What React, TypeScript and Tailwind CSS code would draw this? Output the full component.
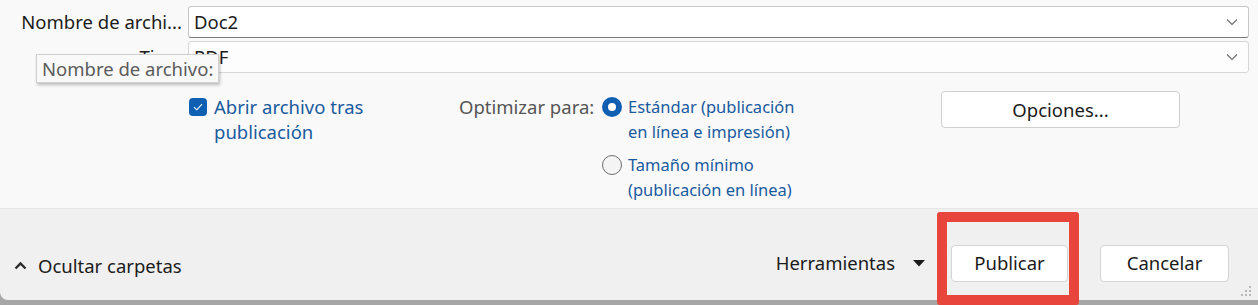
import React from "react";

const Chevron = () => (
  <svg width="12" height="8" viewBox="0 0 12 8" className="text-[#6b6b6b]">
    <path d="M1 1.5 L6 6.5 L11 1.5" fill="none" stroke="currentColor" strokeWidth="1.1" />
  </svg>
);

export default function App() {
  return (
    <div
      className="w-[1258px] h-[305px] bg-[#a6a6a6] relative overflow-hidden text-[18.5px] text-[#1b1b1b]"
      style={{ fontFamily: '"Noto Sans", "Open Sans", sans-serif' }}
    >
      <div className="h-[300px] flex flex-col rounded-bl-[8px] overflow-hidden">
        {/* top */}
        <div className="h-[209px] bg-[#f9f9f9] border-b border-[#e6e6e6] pt-[6px] relative">
          <div className="flex items-center h-[32px]">
            <div className="w-[188px] pr-[6px] text-right leading-none whitespace-nowrap">Nombre de archi...</div>
            <div className="flex-1 mr-[9px] h-[32px] bg-white border border-[#c8c8c8] border-b-[#7a7a7a] rounded-[3px] flex items-center pl-[5px] pr-[10px]">
              <span className="flex-1 leading-none">Doc2</span>
              <Chevron />
            </div>
          </div>
          <div className="flex items-center h-[32px] mt-[3px]">
            <div className="w-[188px] pr-[6px] text-right leading-none text-[#1b1b1b]">Tipo:</div>
            <div className="flex-1 mr-[9px] h-[32px] bg-[#fdfdfd] border border-[#d6d6d6] rounded-[3px] flex items-center pl-[5px] pr-[10px]">
              <span className="flex-1 leading-none">PDF</span>
              <Chevron />
            </div>
          </div>
          {/* tooltip */}
          <div className="absolute left-[36px] top-[54px] h-[29px] px-[5px] flex items-center bg-[#f9f9f9] border border-[#d0d0d0] shadow-[1px_2px_3px_rgba(0,0,0,0.25)] text-[18.5px] text-[#5b5b5b] whitespace-nowrap">
            Nombre de archivo:
          </div>
          {/* options */}
          <div className="flex mt-[21px] pl-[189px]">
            <div className="flex w-[270px] shrink-0">
              <div className="w-[18px] h-[18px] mt-[4px] rounded-[4px] bg-[#0f5fb3] flex items-center justify-center shrink-0">
                <svg width="10" height="8" viewBox="0 0 10 8">
                  <path d="M1 4.2 L3.8 6.8 L9 1.2" fill="none" stroke="white" strokeWidth="1.1" />
                </svg>
              </div>
              <div className="ml-[7px] text-[#1a5a9e] leading-[25px]">
                Abrir archivo tras
                <br />
                publicación
              </div>
            </div>
            <div className="w-[143px] shrink-0 text-[#555] leading-[25px] whitespace-nowrap">Optimizar para:</div>
            <div className="flex flex-col w-[339px] shrink-0 text-[16.5px]">
              <div className="flex">
                <div className="w-[20px] h-[20px] mt-[3px] rounded-full bg-[#0f5fb3] flex items-center justify-center shrink-0">
                  <div className="w-[8px] h-[8px] rounded-full bg-white" />
                </div>
                <div className="ml-[6px] text-[#1a5a9e] leading-[25px] whitespace-nowrap">
                  Estándar (publicación
                  <br />
                  en línea e impresión)
                </div>
              </div>
              <div className="flex mt-[8px]">
                <div className="w-[20px] h-[20px] mt-[3px] rounded-full bg-[#f4f4f4] border border-[#6e6e6e] shrink-0" />
                <div className="ml-[6px] text-[#1a5a9e] leading-[25px] whitespace-nowrap">
                  Tamaño mínimo
                  <br />
                  (publicación en línea)
                </div>
              </div>
            </div>
            <div className="w-[239px] h-[37px] -mt-[3px] shrink-0 bg-white border border-[#d0d0d0] rounded-[4px] flex items-center justify-center">
              Opciones...
            </div>
          </div>
        </div>
        {/* bottom */}
        <div className="flex-1 bg-[#f0f0f0] flex items-center pt-[22px] relative">
          <div className="flex items-center pl-[14px]">
            <svg width="13" height="9" viewBox="0 0 13 9">
              <path d="M1.5 7.5 L6.5 2.5 L11.5 7.5" fill="none" stroke="#2a2a2a" strokeWidth="2.4" />
            </svg>
            <span className="ml-[11px]">Ocultar carpetas</span>
          </div>
          <div className="flex-1" />
          <div className="flex items-center -mt-[5px]">
            <span>Herramientas</span>
            <svg width="12" height="7" viewBox="0 0 12 7" className="ml-[18px]">
              <path d="M0 0 L12 0 L6 6.5 Z" fill="#1b1b1b" />
            </svg>
          </div>
          <div className="w-[117px] h-[37px] ml-[26px] -mt-[5px] bg-white border border-[#d4d4d4] rounded-[4px] flex items-center justify-center">
            Publicar
          </div>
          <div className="w-[129px] h-[37px] ml-[32px] mr-[29px] -mt-[5px] bg-white border border-[#d4d4d4] rounded-[4px] flex items-center justify-center">
            Cancelar
          </div>
          {/* resize grip */}
          <svg width="12" height="12" viewBox="0 0 12 12" className="absolute right-[6px] bottom-[3px]">
            {[
              [10, 2],
              [6, 6],
              [10, 6],
              [2, 10],
              [6, 10],
              [10, 10],
            ].map(([x, y], i) => (
              <rect key={i} x={x - 1} y={y - 1} width="2" height="2" fill="#b8b8b8" />
            ))}
          </svg>
        </div>
      </div>
      {/* red highlight annotation */}
      <div className="absolute left-[937px] top-[212px] w-[142px] h-[93px] border-[10px] border-[#e8453c] rounded-[3px]" />
    </div>
  );
}
